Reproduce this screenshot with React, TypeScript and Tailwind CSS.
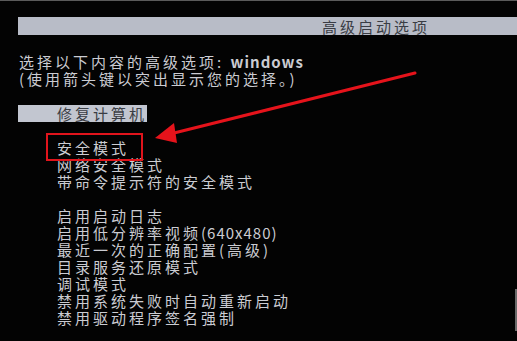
import React from 'react';

const font = { fontFamily: '"Noto Sans CJK SC", "Noto Sans", sans-serif' };

const safeModes = ['安全模式', '网络安全模式', '带命令提示符的安全模式'];

export default function App() {
  return (
    <div
      className="relative w-[517px] h-[341px] overflow-hidden bg-[#030303] border-t border-[#5a5a5a] text-[15px] leading-[17px] tracking-[3px] text-[#cbccd2]"
      style={font}
    >
      {/* Title bar */}
      <div className="mt-[16px] ml-[18px] h-[18px] bg-[#b8bcc7] text-[#3a3d44] pl-[304px] flex items-center">
        高级启动选项
      </div>

      {/* Prompt */}
      <div className="mt-[18px] ml-[19px]">
        <div className="whitespace-nowrap">
          选择以下内容的高级选项: <span className="tracking-[1px] font-bold">windows</span>
        </div>
        <div className="whitespace-nowrap">(使用箭头键以突出显示您的选择。)</div>
      </div>

      {/* Highlighted option */}
      <div className="mt-[18px] ml-[18px] w-[129px] h-[17px] bg-[#c2c6d0] text-[#3a3d44] pl-[39px] whitespace-nowrap">
        修复计算机
      </div>

      {/* Options */}
      <div className="mt-[17px] ml-[57px]">
        {safeModes.map((t) => (
          <div key={t}>{t}</div>
        ))}
      </div>
      <div className="mt-[17px] ml-[57px] whitespace-nowrap">
        <div>启用启动日志</div>
        <div>
          启用低分辨率视频<span className="tracking-[1px]">(640x480)</span>
        </div>
        <div>最近一次的正确配置(高级)</div>
        <div>目录服务还原模式</div>
        <div>调试模式</div>
        <div>禁用系统失败时自动重新启动</div>
        <div>禁用驱动程序签名强制</div>
      </div>

      {/* Annotation: red box + arrow */}
      <div className="absolute left-[46px] top-[132px] w-[97px] h-[28px] border-[2.5px] border-[#e0141c]" />
      <svg className="absolute left-0 top-0" width="517" height="341" viewBox="0 0 517 341">
        <line x1="415" y1="72" x2="170" y2="133" stroke="#e5131b" strokeWidth="3" strokeLinecap="round" />
        <polygon points="155,137 174,122 177,142" fill="#e5131b" />
      </svg>

      {/* right edge artefact */}
      <div className="absolute right-0 top-[288px] w-[2px] h-[42px] bg-[#6a6a6a]" />
    </div>
  );
}
